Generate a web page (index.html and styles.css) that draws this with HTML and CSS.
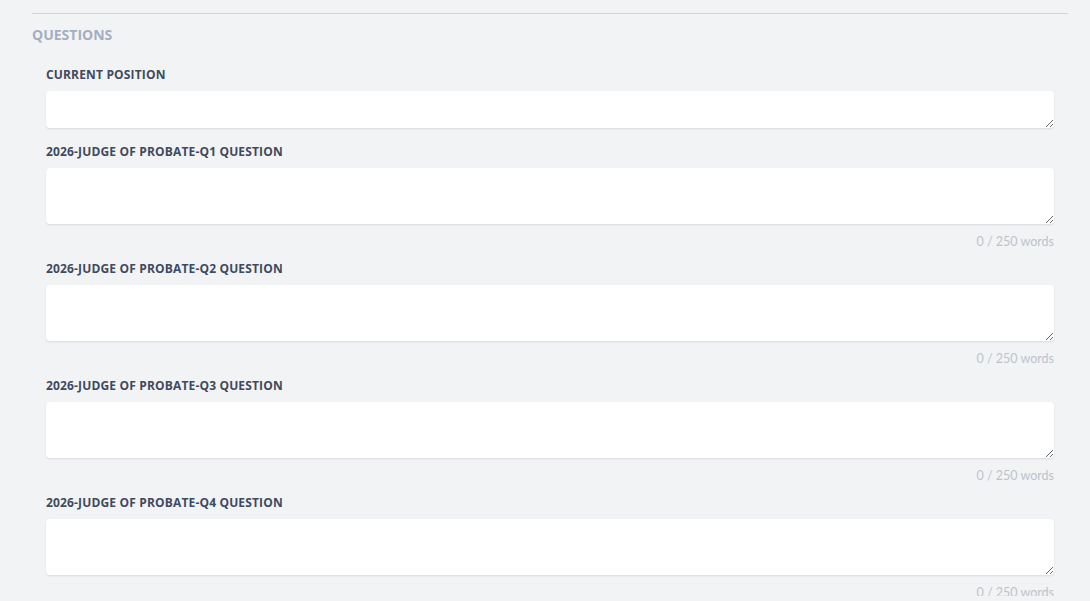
FILE: index.html
```html
<!DOCTYPE html>
<html lang="en">
<head>
	<meta charset="UTF-8" />
	<title>Questions</title>
	<link rel="stylesheet" href="styles.css">
</head>
<body>
	<div class="section">
		<h2 class="sectionTitle">QUESTIONS</h2>
		<div class="fields">
			<div class="field">
				<label class="fieldLabel" for="q0">CURRENT POSITION</label>
				<textarea id="q0" class="answer short"></textarea>
			</div>
			<div class="field">
				<label class="fieldLabel" for="q1">2026-JUDGE OF PROBATE-Q1 QUESTION</label>
				<textarea id="q1" class="answer"></textarea>
				<p class="wordCount">0 / 250 words</p>
			</div>
			<div class="field">
				<label class="fieldLabel" for="q2">2026-JUDGE OF PROBATE-Q2 QUESTION</label>
				<textarea id="q2" class="answer"></textarea>
				<p class="wordCount">0 / 250 words</p>
			</div>
			<div class="field">
				<label class="fieldLabel" for="q3">2026-JUDGE OF PROBATE-Q3 QUESTION</label>
				<textarea id="q3" class="answer"></textarea>
				<p class="wordCount">0 / 250 words</p>
			</div>
			<div class="field">
				<label class="fieldLabel" for="q4">2026-JUDGE OF PROBATE-Q4 QUESTION</label>
				<textarea id="q4" class="answer"></textarea>
				<p class="wordCount">0 / 250 words</p>
			</div>
		</div>
	</div>
</body>
</html>
```

FILE: styles.css
```css
*{
	margin: 0;padding: 0;
	box-sizing: border-box;
}
body{
	background: #f2f3f5;
	font-family: "Open Sans", "Liberation Sans", sans-serif;
	padding: 13px 22px 0 32px;
}
.section{
	border-top: 1px solid #d3d7dd;
}
.sectionTitle{
	font-size: 14px;
	font-weight: 700;
	line-height: 20px;
	color: #a3afc0;
	padding-top: 11px;
	margin-bottom: 21px;
}
.fields{
	padding: 0 14px;
	display: flex;
	flex-direction: column;
	gap: 15px;
}
.field{
	display: flex;
	flex-direction: column;
}
.fieldLabel{
	font-size: 12px;
	font-weight: 700;
	line-height: 18px;
	letter-spacing: 0.16px;
	color: #3e4a5d;
	margin-bottom: 7px;
}
.answer{
	display: block;
	width: 100%;
	height: 56px;
	border: none;
	border-radius: 4px;
	background: #fff;
	box-shadow: 0 1px 2px rgba(30, 40, 60, 0.12);
	font-family: inherit;
	font-size: 14px;
	padding: 8px 10px;
	resize: vertical;
	outline: none;
}
.answer.short{
	height: 37px;
}
.wordCount{
	font-family: Lato, "Open Sans", sans-serif;
	font-size: 12.5px;
	font-weight: 400;
	line-height: 18px;
	color: #bcc3cd;
	text-align: right;
	margin-top: 9px;
	margin-bottom: -6px;
}
```
